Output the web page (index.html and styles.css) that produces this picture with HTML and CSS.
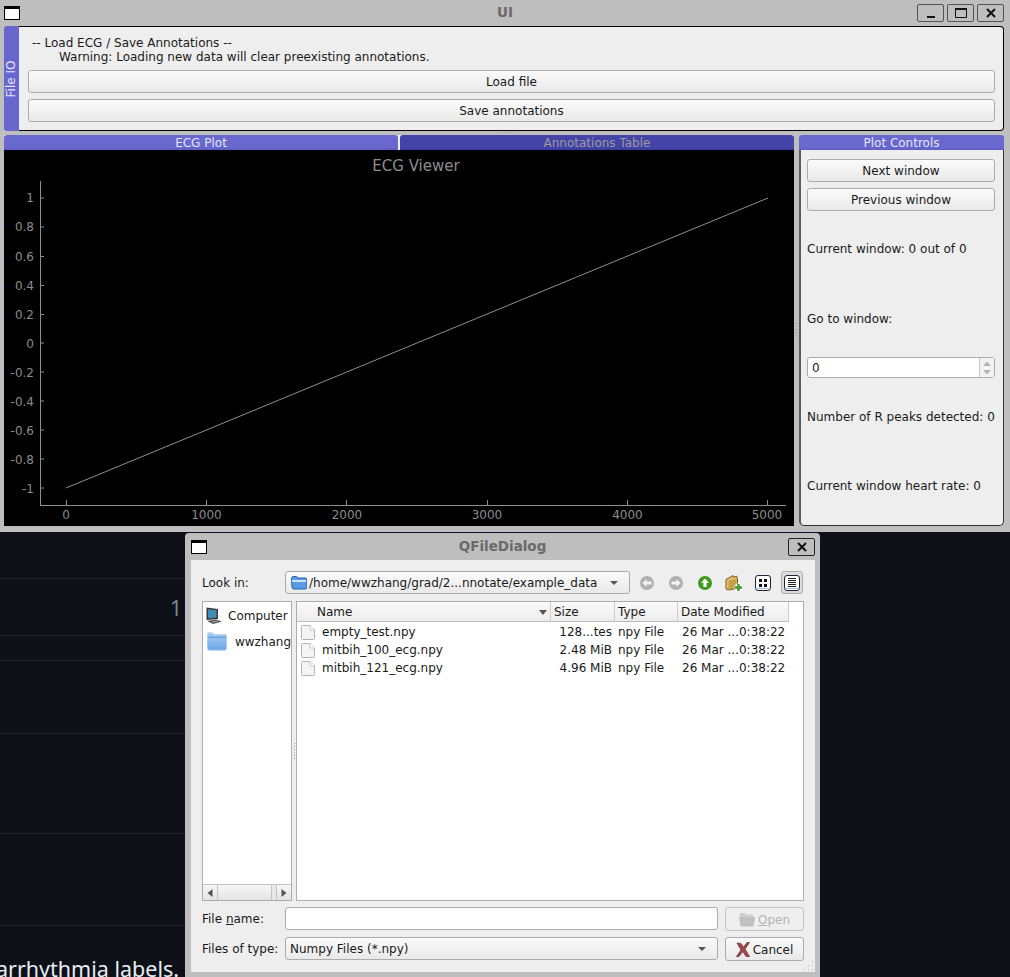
FILE: index.html
```html
<!DOCTYPE html>
<html lang="en">

<head>
    <meta charset="UTF-8">
    <title>UI</title>
    <link rel="stylesheet" href="styles.css">
</head>

<body>
    <div class="desktop">
        <!-- browser page behind the windows -->
        <div class="backdrop">
            <div class="bg-row bg-row-a"><span class="bg-num">1</span></div>
            <div class="bg-row bg-row-b"></div>
            <div class="bg-row bg-row-c"></div>
            <div class="bg-row bg-row-d"></div>
            <div class="bg-row bg-row-e"></div>
            <div class="bg-row bg-row-f"><span class="bg-text">arrhythmia labels.</span></div>
        </div>

        <!-- main window -->
        <div class="window main-window">
            <div class="titlebar main-titlebar">
                <span class="win-icon"></span>
                <span class="win-title">UI</span>
                <div class="win-buttons">
                    <span class="win-btn"><svg width="14" height="12" viewBox="0 0 14 12"><rect x="3" y="9" width="8" height="2" fill="#111"/></svg></span>
                    <span class="win-btn"><svg width="16" height="14" viewBox="0 0 16 14"><path d="M2.5 2.5h11v9h-11z" fill="none" stroke="#111"/><rect x="2" y="2" width="12" height="2" fill="#111"/></svg></span>
                    <span class="win-btn"><svg width="12" height="12" viewBox="0 0 12 12"><path d="M2 2l8 8M10 2l-8 8" stroke="#111" stroke-width="2" fill="none"/></svg></span>
                </div>
            </div>

            <div class="main-body">
                <div class="toolbox">
                    <div class="side-tab"><span>File IO</span></div>
                    <div class="toolbox-page">
                        <div class="note">-- Load ECG / Save Annotations --</div>
                        <div class="note note-indent">Warning: Loading new data will clear preexisting annotations.</div>
                        <button class="btn wide-btn">Load file</button>
                        <button class="btn wide-btn">Save annotations</button>
                    </div>
                </div>
                <div class="h-splitter"><span class="h-dots"></span></div>

                <div class="work-area">
                    <div class="plot-col">
                        <div class="tabs">
                            <div class="tab">ECG Plot</div>
                            <div class="tab tab-off">Annotations Table</div>
                        </div>
                        <svg class="plot" width="790" height="376" viewBox="4 150 790 376">
                            <text x="416" y="171" class="plot-title">ECG Viewer</text>
                            <path class="axis" d="M40.5 181V505.5M40 505.5H786"/>
                            <path class="axis" d="M40.5 198H44M40.5 227H44M40.5 256.500H44M40.5 285.500H44M40.5 314.500H44M40.5 343H44M40.5 372H44M40.500 401H44M40.500 430H44M40.500 459H44M40.500 488H44"/>
                            <path class="axis" d="M66.500 500V505M206.500 500V505M346.500 500V505M487.500 500V505M627.500 500V505M767.500 500V505"/>
                            <g class="y-labels">
                                <text x="34" y="202">1</text>
                                <text x="34" y="231">0.8</text>
                                <text x="34" y="261">0.6</text>
                                <text x="34" y="290">0.4</text>
                                <text x="34" y="319">0.2</text>
                                <text x="34" y="348">0</text>
                                <text x="34" y="377">-0.2</text>
                                <text x="34" y="406">-0.4</text>
                                <text x="34" y="435">-0.6</text>
                                <text x="34" y="464">-0.8</text>
                                <text x="34" y="493">-1</text>
                            </g>
                            <g class="x-labels">
                                <text x="66" y="519">0</text>
                                <text x="206.500" y="519">1000</text>
                                <text x="347" y="519">2000</text>
                                <text x="487" y="519">3000</text>
                                <text x="627.500" y="519">4000</text>
                                <text x="767" y="519">5000</text>
                            </g>
                            <line class="trace" x1="66" y1="488" x2="768" y2="198"/>
                        </svg>
                    </div>

                    <div class="v-splitter"><span class="v-dots"></span></div>

                    <div class="controls-col">
                        <div class="tab controls-tab">Plot Controls</div>
                        <div class="controls-page">
                            <button class="btn">Next window</button>
                            <button class="btn second-btn">Previous window</button>
                            <div class="ctl-label gap-a">Current window: 0 out of 0</div>
                            <div class="ctl-label gap-b">Go to window:</div>
                            <div class="spinner gap-a">
                                <span class="spin-value">0</span>
                                <span class="spin-arrows">
                                    <svg width="14" height="18" viewBox="0 0 14 18"><path d="M7 2.500l4 4.500H3z" fill="#b4b4b4"/><path d="M7 15.500l4-4.500H3z" fill="#b4b4b4"/></svg>
                                </span>
                            </div>
                            <div class="ctl-label gap-c">Number of R peaks detected: 0</div>
                            <div class="ctl-label gap-d">Current window heart rate: 0</div>
                        </div>
                    </div>
                </div>
            </div>
        </div>

        <!-- file dialog -->
        <div class="window dialog">
            <div class="titlebar dialog-titlebar">
                <span class="win-icon"></span>
                <span class="win-title">QFileDialog</span>
                <span class="win-btn dialog-close"><svg width="12" height="12" viewBox="0 0 12 12"><path d="M2 2l8 8M10 2l-8 8" stroke="#111" stroke-width="2" fill="none"/></svg></span>
            </div>

            <div class="dialog-body">
                <div class="form-row">
                    <span class="form-label">Look in:</span>
                    <div class="combo path-combo">
                        <svg class="small-folder" width="16" height="14" viewBox="0 0 16 14"><path d="M.5 2.500q0-2 2-2h3l1.500 1.500h7q2 0 2 2v7q0 2-2 2h-11q-2 0-2-2z" fill="#5b9be2" stroke="#1f63b4"/><rect x="1" y="4" width="14" height="2" fill="#cfe2f7"/></svg>
                        <span class="combo-text">/home/wwzhang/grad/2...nnotate/example_data</span>
                        <span class="combo-arrow"></span>
                    </div>
                    <div class="tool-row">
                        <span class="tool"><svg width="16" height="16" viewBox="0 0 16 16"><circle cx="8" cy="8" r="7" fill="#b0b0b0"/><path d="M3.500 8l4-4v2.500h5v3h-5V12z" fill="#f4f4f4"/></svg></span>
                        <span class="tool"><svg width="16" height="16" viewBox="0 0 16 16"><circle cx="8" cy="8" r="7" fill="#b0b0b0"/><path d="M12.500 8l-4-4v2.500h-5v3h5V12z" fill="#f4f4f4"/></svg></span>
                        <span class="tool"><svg width="16" height="16" viewBox="0 0 16 16"><circle cx="8" cy="8" r="7" fill="#3f9a1e"/><path d="M8 3.500l4 4.200H9.600V12H6.400V7.700H4z" fill="#fff"/></svg></span>
                        <span class="tool"><svg width="18" height="18" viewBox="0 0 18 18"><path d="M1 5.500l7-4 .5 2 3-1.500 1 3v9.500l-9.500 1.500L1 15z" fill="#e3bf6e" stroke="#7a5c22"/><path d="M3.500 6.500l8-1.500v9l-8 1.500z" fill="#c99f4c"/><circle cx="13.500" cy="13.500" r="4" fill="#fff"/><path d="M12.300 10h2.400v2.300H17v2.400h-2.300V17h-2.400v-2.300H10v-2.400h2.300z" fill="#3d9a2d"/></svg></span>
                        <span class="tool"><svg width="16" height="16" viewBox="0 0 16 16"><rect x=".5" y=".5" width="15" height="15" rx="2.500" fill="#fff" stroke="#223"/><path d="M.5 13.500h15" stroke="#9cc3ec"/><path d="M4 4h3v3H4zM9 4h3v3H9zM4 9h3v3H4zM9 9h3v3H9z" fill="#111"/></svg></span>
                        <span class="tool tool-on"><svg width="16" height="16" viewBox="0 0 16 16"><rect x=".5" y=".5" width="15" height="15" rx="2.500" fill="#fff" stroke="#223"/><path d="M.5 13.500h15" stroke="#9cc3ec"/><path d="M4 3.500h8M4 5.500h8M4 7.500h8M4 9.500h8M4 11.500h8" stroke="#222"/></svg></span>
                    </div>
                </div>

                <div class="panes">
                    <div class="sidebar">
                        <div class="side-items">
                            <div class="side-item side-computer">
                                <svg width="17" height="17" viewBox="0 0 17 17"><path d="M.5 .5l11.500 1.500v10L.5 13z" fill="#3a3a3a"/><path d="M2 2.200l8.500 1v7.300L2 11.300z" fill="#3f8fb8"/><path d="M1 14l9-1.500 6 2-9 2.500z" fill="#555"/><path d="M6 15l6-1" stroke="#aaa"/></svg>
                                <span>Computer</span>
                            </div>
                            <div class="side-item side-home">
                                <svg width="23" height="21" viewBox="0 0 23 21"><defs><linearGradient id="homeGrad" x1="0" y1="0" x2="0" y2="1"><stop offset="0" stop-color="#a9cdf3"/><stop offset="1" stop-color="#6aa6e8"/></linearGradient></defs><path d="M.5 2q0-1.500 1.500-1.500h4l2 2h13q1.500 0 1.500 1.500v14.500q0 2-2 2h-18q-2 0-2-2z" fill="url(#homeGrad)" stroke="#a8ccf0"/><rect x="1" y="5" width="21" height="1" fill="#4d8fdb"/></svg>
                                <span>wwzhang</span>
                            </div>
                        </div>
                        <div class="hscroll">
                            <span class="scroll-btn"><svg width="6" height="8" viewBox="0 0 6 8"><path d="M5.500 0v8L.5 4z" fill="#555"/></svg></span>
                            <span class="scroll-handle"></span>
                            <span class="scroll-track"></span>
                            <span class="scroll-btn"><svg width="6" height="8" viewBox="0 0 6 8"><path d="M.5 0v8l5-4z" fill="#555"/></svg></span>
                        </div>
                    </div>
                    <div class="pane-splitter"><span class="v-dots"></span></div>
                    <div class="files">
                        <div class="file-head">
                            <div class="head-cell col-name">Name<span class="sort-arrow"></span></div>
                            <div class="head-cell col-size">Size</div>
                            <div class="head-cell col-type">Type</div>
                            <div class="head-cell col-date">Date Modified</div>
                        </div>
                        <div class="file-row">
                            <div class="cell col-name"><svg class="file-icon" width="14" height="15" viewBox="0 0 14 15"><path d="M.5 1.500q0-1 1-1h7.500l4.500 4.500v8.500q0 1-1 1h-11q-1 0-1-1z" fill="#f4f4f4" stroke="#b4b4b4"/><path d="M9 .5v4.500h4.500" fill="#fff" stroke="#c4c4c4"/></svg>empty_test.npy</div>
                            <div class="cell col-size">128...tes</div>
                            <div class="cell col-type">npy File</div>
                            <div class="cell col-date">26 Mar ...0:38:22</div>
                        </div>
                        <div class="file-row">
                            <div class="cell col-name"><svg class="file-icon" width="14" height="15" viewBox="0 0 14 15"><path d="M.5 1.500q0-1 1-1h7.500l4.500 4.500v8.500q0 1-1 1h-11q-1 0-1-1z" fill="#f4f4f4" stroke="#b4b4b4"/><path d="M9 .5v4.500h4.500" fill="#fff" stroke="#c4c4c4"/></svg>mitbih_100_ecg.npy</div>
                            <div class="cell col-size">2.48 MiB</div>
                            <div class="cell col-type">npy File</div>
                            <div class="cell col-date">26 Mar ...0:38:22</div>
                        </div>
                        <div class="file-row">
                            <div class="cell col-name"><svg class="file-icon" width="14" height="15" viewBox="0 0 14 15"><path d="M.5 1.500q0-1 1-1h7.500l4.500 4.500v8.500q0 1-1 1h-11q-1 0-1-1z" fill="#f4f4f4" stroke="#b4b4b4"/><path d="M9 .5v4.500h4.500" fill="#fff" stroke="#c4c4c4"/></svg>mitbih_121_ecg.npy</div>
                            <div class="cell col-size">4.96 MiB</div>
                            <div class="cell col-type">npy File</div>
                            <div class="cell col-date">26 Mar ...0:38:22</div>
                        </div>
                    </div>
                </div>

                <div class="form-row name-row">
                    <span class="form-label">File <u>n</u>ame:</span>
                    <div class="text-input"></div>
                    <button class="btn dlg-btn btn-disabled">
                        <svg width="16" height="15" viewBox="0 0 16 15"><path d="M1 1h5l1.500 1.500H14v3H1z" fill="#cfcfcf"/><path d="M0 5h16l-1.500 9.500h-13z" fill="#c0c0c0"/></svg>
                        <span class="dlg-btn-text"><u>O</u>pen</span>
                    </button>
                </div>
                <div class="form-row type-row">
                    <span class="form-label">Files of type:</span>
                    <div class="combo type-combo">
                        <span class="combo-text">Numpy Files (*.npy)</span>
                        <span class="combo-arrow"></span>
                    </div>
                    <button class="btn dlg-btn">
                        <svg width="14" height="15" viewBox="0 0 14 15"><path d="M1 1l4 .5 2.500 3.500L11 .5h2.500L9 7l4.500 7.500H10L6.800 9.500 3 14.500H.5L5 8z" fill="#a8444c" stroke="#5c2b2f" stroke-width=".7"/></svg>
                        <span class="dlg-btn-text">Cancel</span>
                    </button>
                </div>
                <svg class="size-grip" width="11" height="11" viewBox="0 0 11 11"><path d="M9 1h1v1H9zM5 5h1v1H5zM9 5h1v1H9zM1 9h1v1H1zM5 9h1v1H5zM9 9h1v1H9z" fill="#b8b8b8"/></svg>
            </div>
        </div>
    </div>
</body>

</html>
```

FILE: styles.css
```css
body {
    margin: 0;
    background: #0d1117;
    font-family: "DejaVu Sans", sans-serif;
    font-size: 12px;
    color: #1a1a1a;
}

button {
    font: inherit;
    color: inherit;
}

.desktop {
    position: relative;
    width: 1010px;
    height: 977px;
    overflow: hidden;
    background: #0d1117;
}

/* page behind the windows */
.backdrop {
    width: 185px;
    height: 977px;
    padding-top: 578px;
    box-sizing: border-box;
    font-family: "Noto Sans", sans-serif;
    overflow: hidden;
}

.bg-row {
    border-top: 1px solid #21262d;
    box-sizing: border-box;
}

.bg-row-a { height: 57px; text-align: right; }
.bg-row-b { height: 25px; }
.bg-row-c { height: 73px; }
.bg-row-d { height: 100px; }
.bg-row-e { height: 92px; }
.bg-row-f { height: 52px; }

.bg-num {
    display: block;
    padding: 14px 3px 0 0;
    font-size: 21px;
    line-height: 30px;
    color: #7d8590;
}

.bg-text {
    display: block;
    margin: 29px 0 0 -4px;
    font-size: 21.5px;
    line-height: 28px;
    color: #e6edf3;
    white-space: nowrap;
}

/* windows */
.window {
    position: absolute;
    background: #bebebe;
    box-sizing: border-box;
}

.main-window {
    left: 0;
    top: 0;
    width: 1010px;
    height: 532px;
}

.dialog {
    left: 185px;
    top: 533px;
    width: 635px;
    height: 444px;
    border-radius: 4px 4px 0 0;
}

.titlebar {
    position: relative;
    display: flex;
    align-items: center;
}

.main-titlebar {
    height: 26px;
    padding: 0 6px 0 4px;
}

.dialog-titlebar {
    height: 27px;
    padding: 0 5px 0 6px;
}

.win-icon {
    width: 16px;
    height: 14px;
    box-sizing: border-box;
    border: 1px solid #000;
    border-top-width: 3px;
    background: #fff;
}

.win-title {
    position: absolute;
    left: 0;
    right: 0;
    top: 6px;
    text-align: center;
    font-weight: bold;
    font-size: 13.500px;
    line-height: 15px;
    color: #6a6a6a;
    pointer-events: none;
}

.main-titlebar .win-title {
    top: 5px;
}

.win-buttons {
    display: flex;
    gap: 3px;
    margin-left: auto;
}

.win-btn {
    display: flex;
    align-items: center;
    justify-content: center;
    width: 27px;
    height: 18px;
    box-sizing: border-box;
    border: 1px solid #555;
    border-radius: 2px;
}

.dialog-close {
    margin-left: auto;
    border-color: #222;
}

.main-body {
    padding: 0 6px 0 4px;
}

/* file io toolbox */
.toolbox {
    display: flex;
    height: 105px;
}

.side-tab {
    display: flex;
    align-items: center;
    justify-content: center;
    width: 15px;
    background: #6666cc;
    border-radius: 3px 0 0 3px;
    color: #e4e4f8;
}

.side-tab span {
    transform: rotate(-90deg);
    white-space: nowrap;
    font-size: 12px;
}

.toolbox-page {
    flex: 1;
    background: #eeeeee;
    border: 1px solid #000;
    border-left: none;
    border-radius: 0 4px 4px 0;
    padding: 9px 8px 0 9px;
}

.note {
    line-height: 14px;
    padding-left: 4px;
}

.note-indent {
    padding-left: 31px;
}

.btn {
    display: flex;
    align-items: center;
    justify-content: center;
    gap: 3px;
    padding: 0;
    height: 23px;
    width: 100%;
    box-sizing: border-box;
    border: 1px solid #acacac;
    border-radius: 3px;
    background: linear-gradient(#fbfbfb, #e9e9e9);
}

.wide-btn {
    margin-top: 6px;
}

.h-splitter {
    display: flex;
    justify-content: center;
    height: 4px;
    padding: 1px 0 0 4px;
    box-sizing: border-box;
}

.h-dots {
    width: 16px;
    height: 1px;
    background: repeating-linear-gradient(90deg, #9c9c9c 0 1px, transparent 1px 3px);
}

.work-area {
    display: grid;
    grid-template-columns: 790px 5px 205px;
    height: 391px;
}

.v-splitter,
.pane-splitter {
    display: flex;
    align-items: center;
    justify-content: center;
}

.v-dots {
    width: 1px;
    height: 16px;
    background: repeating-linear-gradient(#9c9c9c 0 1px, transparent 1px 3px);
}

.tabs {
    display: grid;
    grid-template-columns: 394px 394px;
    column-gap: 2px;
    background: #eeeeee;
}

.tab {
    height: 15px;
    line-height: 16px;
    text-align: center;
    font-size: 12px;
    color: #e4e4f8;
    background: linear-gradient(#6868cf 85%, #5b5bc2);
    border-radius: 3px 3px 0 0;
}

.tab-off {
    background: linear-gradient(#4343a8 85%, #3a3a9c);
    color: #9a9a9a;
}

.plot {
    display: block;
    background: #000;
}

.plot-title {
    text-anchor: middle;
    font-size: 15px;
    fill: #8c8c8c;
}

.axis {
    fill: none;
    stroke: #8f8f8f;
    stroke-width: 1;
}

.y-labels text {
    text-anchor: end;
    font-size: 12px;
    fill: #8c8c8c;
}

.x-labels text {
    text-anchor: middle;
    font-size: 12px;
    fill: #8c8c8c;
}

.trace {
    stroke: #8f8f8f;
    stroke-width: 1;
}

/* plot controls */
.controls-page {
    height: 376px;
    box-sizing: border-box;
    background: #eeeeee;
    border: 1px solid #333;
    border-left: 2px solid #5a5a5a;
    border-top: none;
    border-radius: 0 0 5px 5px;
    padding: 9px 8px 0 6px;
}

.second-btn {
    margin-top: 6px;
}

.ctl-label {
    height: 16px;
    line-height: 16px;
    white-space: nowrap;
}

.gap-a {
    margin-top: 30px;
}

.gap-b {
    margin-top: 54px;
}

.gap-c {
    margin-top: 31px;
}

.gap-d {
    margin-top: 53px;
}

.spinner {
    display: flex;
    height: 21px;
    box-sizing: border-box;
    border: 1px solid #acacac;
    border-radius: 3px;
    background: #fff;
}

.spin-value {
    flex: 1;
    padding-left: 4px;
    line-height: 21px;
}

.spin-arrows {
    display: flex;
    align-items: center;
    justify-content: center;
    width: 14px;
    border-left: 1px solid #c4c4c4;
    background: #f2f2f2;
}

/* dialog */
.dialog-body {
    position: relative;
    height: 412px;
    margin-left: 6px;
    width: 624px;
    box-sizing: border-box;
    padding: 11px 11px 0;
    background: #eeeeee;
}

.form-row {
    display: flex;
    align-items: flex-start;
    height: 23px;
}

.form-label {
    width: 83px;
    flex-shrink: 0;
    white-space: nowrap;
    line-height: 25px;
}

.combo {
    display: flex;
    align-items: center;
    height: 23px;
    box-sizing: border-box;
    border: 1px solid #acacac;
    border-radius: 3px;
    background: linear-gradient(#fbfbfb, #e9e9e9);
    padding: 0 4px;
}

.path-combo {
    width: 345px;
    flex-shrink: 0;
}

.type-combo {
    width: 433px;
    flex-shrink: 0;
}

.small-folder {
    margin: 0 2px 0 1px;
    flex-shrink: 0;
}

.combo-text {
    flex: 1;
    white-space: nowrap;
    padding-top: 1px;
}

.combo-arrow {
    width: 0;
    height: 0;
    margin: 0 7px 0 0;
    border-left: 4px solid transparent;
    border-right: 4px solid transparent;
    border-top: 4px solid #555;
}

.tool-row {
    display: flex;
    gap: 7px;
    margin-left: 6px;
}

.tool {
    display: flex;
    align-items: center;
    justify-content: center;
    width: 22px;
    height: 23px;
    box-sizing: border-box;
    border-radius: 3px;
}

.tool-on {
    border: 1px solid #acacac;
    background: #dcdcdc;
}

.panes {
    display: flex;
    height: 300px;
    margin: 7px 0 6px;
}

.sidebar {
    display: flex;
    flex-direction: column;
    width: 90px;
    box-sizing: border-box;
    border: 1px solid #acacac;
    background: #fff;
}

.side-items {
    flex: 1;
    overflow: hidden;
}

.side-item {
    display: flex;
    align-items: center;
    white-space: nowrap;
    padding-top: 1px;
}

.side-computer {
    height: 26px;
    box-sizing: border-box;
    padding-left: 3px;
    gap: 5px;
}

.side-home {
    height: 26px;
    box-sizing: border-box;
    padding-left: 4px;
    gap: 8px;
}

.hscroll {
    display: flex;
    height: 15px;
    border-top: 1px solid #c4c4c4;
    background: #e8e8e8;
}

.scroll-btn {
    display: flex;
    align-items: center;
    justify-content: center;
    width: 14px;
    background: linear-gradient(#f6f6f6, #e4e4e4);
}

.scroll-handle {
    flex: 1;
    border-left: 1px solid #c4c4c4;
    border-right: 1px solid #c4c4c4;
    background: linear-gradient(#f6f6f6, #e4e4e4);
}

.scroll-track {
    width: 4px;
    border-right: 1px solid #c4c4c4;
}

.pane-splitter {
    width: 4px;
}

.files {
    flex: 1;
    border: 1px solid #acacac;
    background: #fff;
}

.file-head {
    display: flex;
    height: 20px;
    margin-bottom: 1px;
}

.head-cell {
    display: flex;
    align-items: center;
    box-sizing: border-box;
    height: 20px;
    padding-top: 1px;
    padding-left: 3px;
    background: linear-gradient(#fbfbfb, #ececec);
    border-right: 1px solid #cccccc;
    border-bottom: 1px solid #bdbdbd;
}

.head-cell.col-name {
    padding-left: 20px;
    justify-content: space-between;
    padding-right: 3px;
}

.sort-arrow {
    width: 0;
    height: 0;
    border-left: 4px solid transparent;
    border-right: 4px solid transparent;
    border-top: 5px solid #555;
}

.col-name { width: 254px; }
.col-size { width: 64px; }
.col-type { width: 63px; }
.col-date { width: 111px; }

.file-row {
    display: flex;
    height: 18px;
    align-items: center;
}

.cell {
    box-sizing: border-box;
    white-space: nowrap;
}

.cell.col-name {
    display: flex;
    align-items: center;
    padding-left: 4px;
}

.file-icon {
    margin-right: 7px;
}

.cell.col-size {
    text-align: right;
    padding-right: 3px;
}

.cell.col-type {
    padding-left: 3px;
}

.cell.col-date {
    padding-left: 4px;
}

.text-input {
    width: 433px;
    height: 23px;
    box-sizing: border-box;
    border: 1px solid #acacac;
    border-radius: 3px;
    background: #fff;
}

.dlg-btn {
    width: 79px;
    height: 24px;
    margin-left: 7px;
    flex-shrink: 0;
}

.dlg-btn-text {
    padding-top: 2px;
}

.btn-disabled {
    color: #b4b4b4;
    background: #efefef;
    border-color: #c4c4c4;
}

.type-row {
    margin-top: 7px;
}

.size-grip {
    position: absolute;
    right: 1px;
    bottom: 1px;
}
```
